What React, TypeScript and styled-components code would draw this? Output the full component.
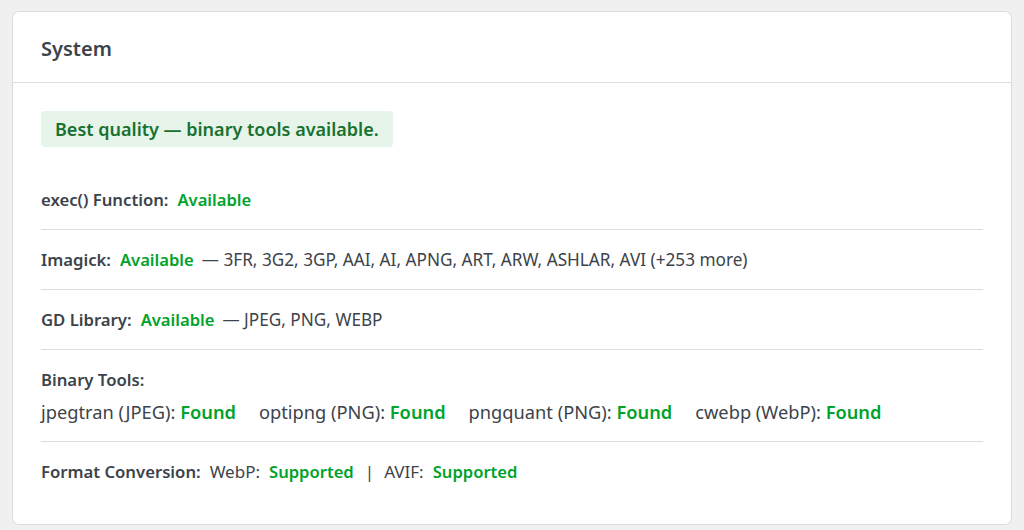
import React from 'react';
import styled, { createGlobalStyle } from 'styled-components';

const GlobalStyle = createGlobalStyle`
  html, body {
    margin: 0;
    padding: 0;
    background: #f0f0f1;
  }
  body {
    font-family: "Noto Sans", "Open Sans", sans-serif;
    color: #3c434a;
  }
`;

const Page = styled.div`
  padding: 11px 12px 6px 12px;
`;

const Card = styled.section`
  background: #fff;
  border: 1px solid #dcdcde;
  border-radius: 7px;
  overflow: hidden;
`;

const Header = styled.header`
  height: 68px;
  display: flex;
  align-items: center;
  padding: 2px 28px 0 28px;
  border-bottom: 1px solid #dcdcde;
`;

const Title = styled.h2`
  margin: 0;
  font-size: 20px;
  font-weight: 600;
  color: #3c434a;
`;

const Body = styled.div`
  padding: 28px 28px 23px 28px;
`;

const Notice = styled.div`
  display: inline-block;
  background: #e6f4ea;
  color: #18712f;
  border-radius: 4px;
  padding: 0 14px;
  height: 36px;
  line-height: 36px;
  font-size: 18px;
  font-weight: 600;
  margin-bottom: 23px;
`;

const Row = styled.div<{ last?: boolean }>`
  padding: 19px 0;
  line-height: 21px;
  font-size: 17px;
  white-space: nowrap;
  border-bottom: ${({ last }) => (last ? 'none' : '1px solid #dcdcde')};
`;

const StackRow = styled(Row)`
  padding-bottom: 17px;
`;

const Label = styled.span`
  font-weight: 600;
  font-size: 16.7px;
  margin-right: 9px;
`;

const Ok = styled.span`
  color: #00a32a;
  font-weight: 600;
  font-size: 16.6px;
`;

const Extra = styled.span`
  margin-left: 8px;
  font-size: 17.2px;
`;

const Format = styled.span`
  margin-right: 9px;
`;

const Sep = styled.span`
  margin: 0 10px 0 11px;
`;

const ToolLine = styled.div`
  margin-top: 10px;
  display: flex;
  gap: 23px;
  font-size: 18.25px;
  line-height: 24px;
`;

const Tool = styled.span`
  white-space: nowrap;
`;

const ToolOk = styled.span`
  color: #00a32a;
  font-weight: 600;
`;

const tools = ['jpegtran (JPEG)', 'optipng (PNG)', 'pngquant (PNG)', 'cwebp (WebP)'];

export default function App() {
  return (
    <>
      <GlobalStyle />
      <Page>
        <Card>
          <Header>
            <Title>System</Title>
          </Header>
          <Body>
            <Notice>Best quality — binary tools available.</Notice>
            <Row>
              <Label>exec() Function:</Label>
              <Ok>Available</Ok>
            </Row>
            <Row>
              <Label>Imagick:</Label>
              <Ok>Available</Ok>
              <Extra>— 3FR, 3G2, 3GP, AAI, AI, APNG, ART, ARW, ASHLAR, AVI (+253 more)</Extra>
            </Row>
            <Row>
              <Label>GD Library:</Label>
              <Ok>Available</Ok>
              <Extra>— JPEG, PNG, WEBP</Extra>
            </Row>
            <StackRow>
              <Label>Binary Tools:</Label>
              <ToolLine>
                {tools.map((name) => (
                  <Tool key={name}>
                    {name}: <ToolOk>Found</ToolOk>
                  </Tool>
                ))}
              </ToolLine>
            </StackRow>
            <Row last>
              <Label>Format Conversion:</Label>
              <Format>WebP:</Format>
              <Ok>Supported</Ok>
              <Sep>|</Sep>
              <Format>AVIF:</Format>
              <Ok>Supported</Ok>
            </Row>
          </Body>
        </Card>
      </Page>
    </>
  );
}
